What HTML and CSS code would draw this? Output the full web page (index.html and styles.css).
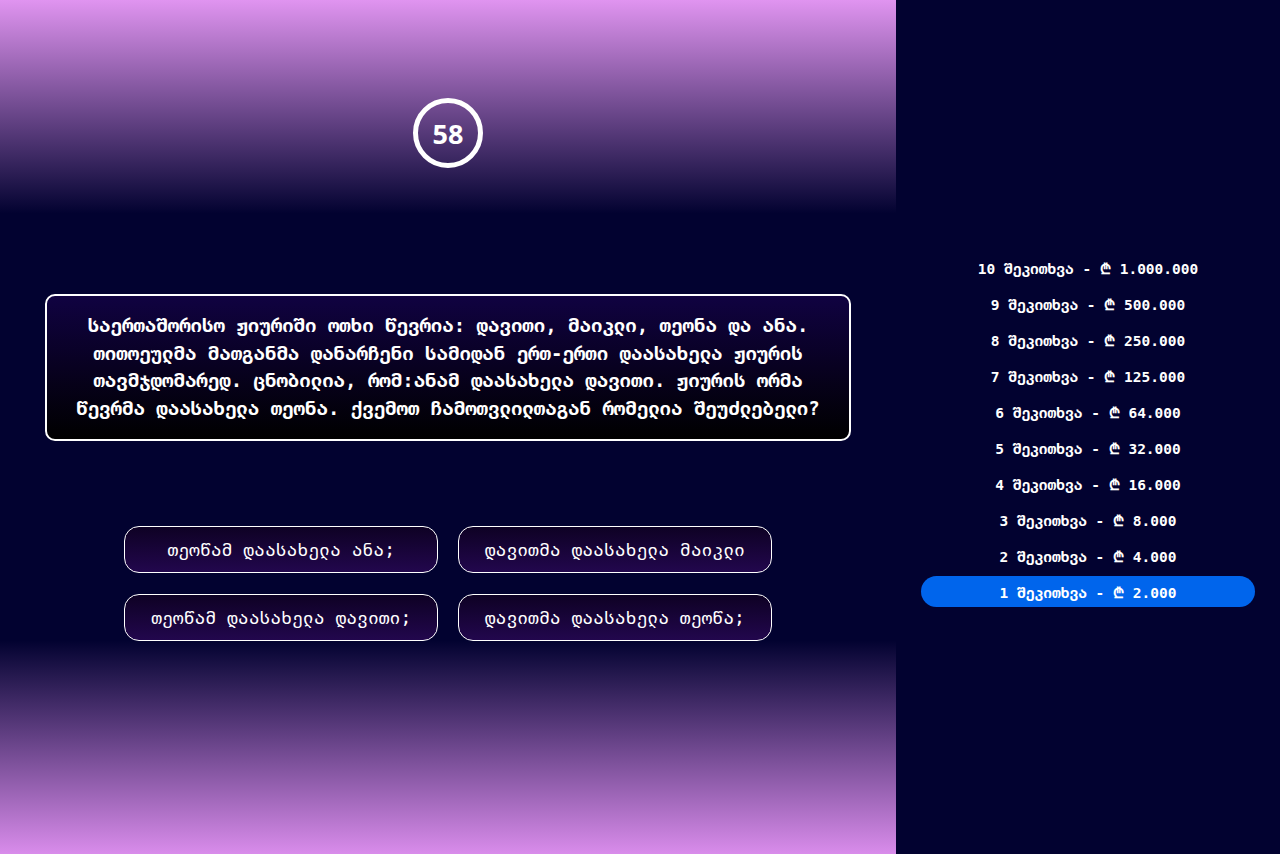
FILE: index.html
```html
<!DOCTYPE html>
<html lang="ka">
<head>
<meta charset="utf-8">
<title>ვინ გახდება მილიონერი</title>
<link rel="stylesheet" href="styles.css">
</head>
<body>
<div class="app">
  <main class="main">
    <div class="top">
      <div class="timer">58</div>
    </div>
    <div class="question">საერთაშორისო ჟიურიში ოთხი წევრია: დავითი, მაიკლი, თეონა და ანა. თითოეულმა მათგანმა დანარჩენი სამიდან ერთ-ერთი დაასახელა ჟიურის თავმჯდომარედ. ცნობილია, რომ:ანამ დაასახელა დავითი. ჟიურის ორმა წევრმა დაასახელა თეონა. ქვემოთ ჩამოთვლილთაგან რომელია შეუძლებელი?</div>
    <div class="answers">
      <div class="answer">თეოწამ დაასახელა ანა;</div>
      <div class="answer">დავითმა დაასახელა მაიკლი</div>
      <div class="answer">თეოწამ დაასახელა დავითი;</div>
      <div class="answer">დავითმა დაასახელა თეოწა;</div>
    </div>
  </main>
  <aside class="pyramid">
    <ul class="money-list">
      <li class="money-item">10 შეკითხვა - ₾ 1.000.000</li>
      <li class="money-item">9 შეკითხვა - ₾ 500.000</li>
      <li class="money-item">8 შეკითხვა - ₾ 250.000</li>
      <li class="money-item">7 შეკითხვა - ₾ 125.000</li>
      <li class="money-item">6 შეკითხვა - ₾ 64.000</li>
      <li class="money-item">5 შეკითხვა - ₾ 32.000</li>
      <li class="money-item">4 შეკითხვა - ₾ 16.000</li>
      <li class="money-item">3 შეკითხვა - ₾ 8.000</li>
      <li class="money-item">2 შეკითხვა - ₾ 4.000</li>
      <li class="money-item active">1 შეკითხვა - ₾ 2.000</li>
    </ul>
  </aside>
</div>
</body>
</html>
```
FILE: styles.css
```css
* { box-sizing: border-box; }
html, body { margin: 0; padding: 0; }
body {
  width: 1280px;
  height: 854px;
  overflow: hidden;
  color: #fff;
  font-family: "DejaVu Sans Mono", monospace;
  background: #020230;
}
.app {
  display: flex;
  height: 854px;
}
.main {
  width: 896px;
  flex: none;
  display: flex;
  flex-direction: column;
  align-items: center;
  background: linear-gradient(to bottom, #e094f0 0%, #020230 25%, #020230 75%, #d98ceb 100%);
}
.top {
  height: 266px;
  width: 100%;
  display: flex;
  align-items: center;
  justify-content: center;
}
.timer {
  width: 70px;
  height: 70px;
  border-radius: 50%;
  border: 5px solid #fff;
  display: flex;
  align-items: center;
  justify-content: center;
  font-family: "Open Sans", sans-serif;
  font-weight: 700;
  font-size: 27px;
}
.question {
  margin-top: 28px;
  width: 806px;
  padding: 16px 20px;
  border: 2px solid #fff;
  border-radius: 10px;
  background: linear-gradient(#100241, #000);
  text-align: center;
  font-size: 19px;
  font-weight: 700;
  line-height: 27.7px;
}
.answers {
  margin-top: 85px;
  width: 100%;
  display: flex;
  flex-wrap: wrap;
  justify-content: center;
}
.answer {
  width: 313.6px;
  margin: 0 10px 21px;
  padding: 10px;
  border: 1px solid #fff;
  border-radius: 15px;
  background: linear-gradient(#0e0124, #22074d);
  text-align: center;
  font-size: 18px;
  line-height: 25px;
}
.pyramid {
  flex: 1;
  background: #020230;
  display: flex;
  flex-direction: column;
  justify-content: center;
  padding: 5px 25px 0;
}
.money-list {
  list-style: none;
  margin: 0;
  padding: 0;
  display: flex;
  flex-direction: column;
  gap: 5px;
}
.money-item {
  height: 31px;
  display: flex;
  align-items: center;
  justify-content: center;
  border-radius: 16px;
  font-size: 14.5px;
  font-weight: 700;
}
.money-item.active {
  background: #0065ec;
}
```
